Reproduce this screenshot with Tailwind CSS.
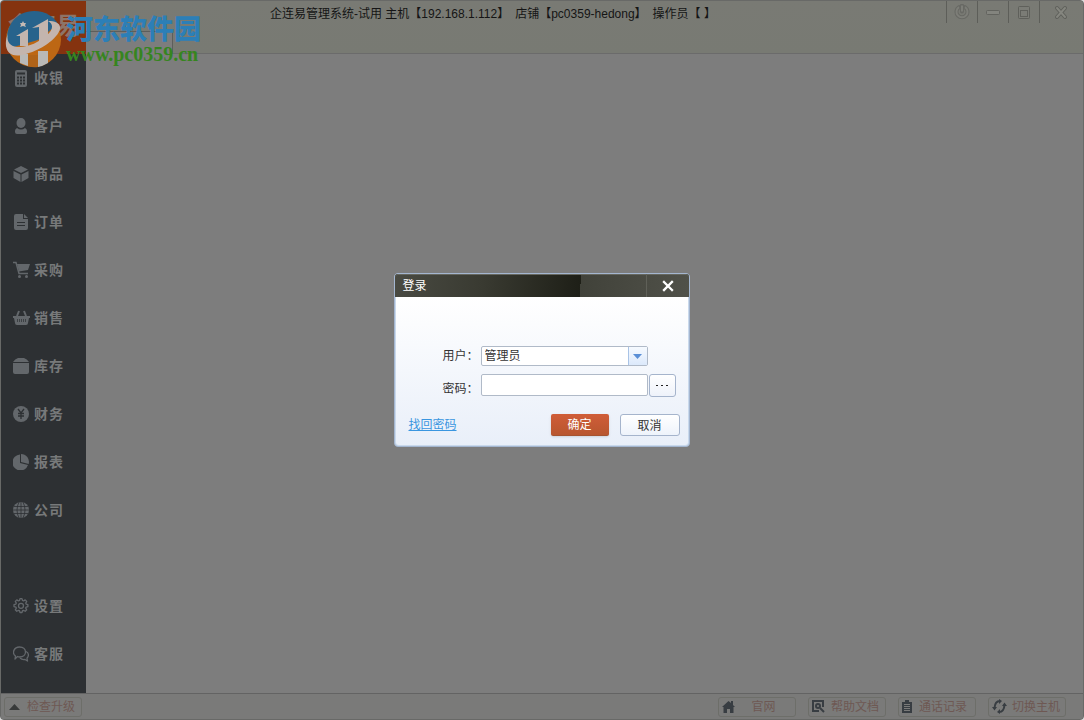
<!DOCTYPE html>
<html lang="zh-CN">
<head>
<meta charset="utf-8">
<title>企连易管理系统</title>
<script src="https://cdn.jsdelivr.net/npm/@tailwindcss/browser@4"></script>
</head>
<body class="h-screen overflow-hidden bg-[#dddddd] font-['Liberation_Sans','Noto_Sans_CJK_SC',sans-serif] text-[12px] leading-4">
<div class="relative flex h-full flex-col overflow-hidden rounded-[4px] border border-[#686967] bg-[#7d7d7d]">

  <header class="flex h-[53px] shrink-0 border-b border-[#6b6b6b] bg-linear-to-b from-[#797a74] to-[#787a73]">
    <div class="-mb-px flex w-[85px] shrink-0 items-start bg-[#85330f] pt-[9px] pl-[7px] text-[24px] leading-8 font-bold text-[#8d7468]">企连易</div>
    <div class="flex w-[87px] shrink-0 items-end">
      <div class="-mb-px h-[23px] w-full border-t border-r border-[#5d5e5c] bg-[#7d7d7d]"></div>
    </div>
    <h1 class="flex grow gap-[6px] pt-[5px] pl-[97px] whitespace-pre text-[#151515]"><span>企连易管理系统-试用 主机【192.168.1.112】</span><span>店铺【pc0359-hedong】</span><span>操作员【 】</span></h1>
    <div class="mr-px flex h-[22px] shrink-0">
      <button aria-label="电源" class="flex w-[31px] items-center justify-center border-l border-[#5d5e59]">
        <svg class="size-4" viewBox="0 0 16 16" fill="none"><path d="M5 3.200a5.500 5.500 0 1 0 6 0M8 1.500v6" stroke="#686964" stroke-width="4" stroke-linecap="round"/><path d="M5 3.200a5.500 5.500 0 1 0 6 0M8 1.500v6" stroke="#7d7e78" stroke-width="2"/></svg>
      </button>
      <button aria-label="最小化" class="flex w-[31px] items-center justify-center border-l border-[#5d5e59]">
        <svg class="size-4" viewBox="0 0 16 16"><rect x="1.500" y="6.500" width="13" height="4" rx="1" fill="#83847e" stroke="#62635e"/></svg>
      </button>
      <button aria-label="最大化" class="flex w-[31px] items-center justify-center border-l border-[#5d5e59]">
        <svg class="size-4" viewBox="0 0 16 16" fill="#7b7c76" stroke="#5f605b"><rect x="2.500" y="2.500" width="11" height="12" rx="1"/><rect x="4.500" y="6.500" width="7" height="6"/></svg>
      </button>
      <button aria-label="关闭" class="flex w-[43px] items-center justify-center border-l border-[#5d5e59]">
        <svg class="size-4" viewBox="0 0 16 16" stroke-linecap="round"><path d="m4 4 8 9m0-9-8 9" stroke="#5f605b" stroke-width="4"/><path d="m4 4 8 9m0-9-8 9" stroke="#85867f" stroke-width="2"/></svg>
      </button>
    </div>
  </header>

  <div class="flex min-h-0 grow">
    <nav class="flex w-[85px] shrink-0 flex-col bg-[#2d3033] text-[14px] font-bold text-[#77797a]">
      <a href="#" class="flex h-12 items-center gap-[5px] pl-3"><svg class="size-4 overflow-visible text-[#63676b]" viewBox="0 0 16 16"><rect x="2" width="12" height="17" rx="2" fill="currentColor"/><path d="M4 7.500h8M4 10.500h8M4 13.500h8" stroke="#2d3033" stroke-width="2" stroke-dasharray="2 1"/><path d="M4 3.500h8" stroke="#2d3033" stroke-width="2"/></svg><span class="tracking-[1px]">收银</span></a>
      <a href="#" class="flex h-12 items-center gap-[5px] pl-3"><svg class="size-4 text-[#63676b]" viewBox="0 0 16 16" fill="currentColor"><ellipse cx="8" cy="5" rx="4.500" ry="5"/><path d="M4 10q4 3 8 0 2 1 2 3v1q0 2-2 2H4q-2 0-2-2v-1q0-2 2-3Z"/></svg><span class="tracking-[1px]">客户</span></a>
      <a href="#" class="flex h-12 items-center gap-[5px] pl-3"><svg class="size-4 text-[#63676b]" viewBox="0 0 16 16" fill="currentColor"><path d="m8 0 7 3.500L8 7 1 3.500ZM.5 5 7.500 8.500V16l-7-4ZM15.500 5l-7 3.500V16l7-4Z"/></svg><span class="tracking-[1px]">商品</span></a>
      <a href="#" class="flex h-12 items-center gap-[5px] pl-3"><svg class="size-4 text-[#63676b]" viewBox="0 0 16 16"><path d="M3 0h7v5h5v9q0 2-2 2H3q-2 0-2-2V2q0-2 2-2Zm8 0 4 4h-4Z" fill="currentColor"/><path d="M4 8.500h8M4 11.500h8" stroke="#2d3033"/></svg><span class="tracking-[1px]">订单</span></a>
      <a href="#" class="flex h-12 items-center gap-[5px] pl-3"><svg class="size-4 overflow-visible text-[#63676b]" viewBox="0 0 16 16"><path d="M0 .5h3l3 11h9" fill="none" stroke="currentColor" stroke-width="1.500"/><path d="M4 2h13l-2 6-9 1.500Z" fill="currentColor"/><circle cx="6.500" cy="14.500" r="1.500" fill="currentColor"/><circle cx="13.500" cy="14.500" r="1.500" fill="currentColor"/></svg><span class="tracking-[1px]">采购</span></a>
      <a href="#" class="flex h-12 items-center gap-[5px] pl-3"><svg class="size-4 overflow-visible text-[#63676b]" viewBox="0 0 16 16"><path d="M0 6h17v2h-1l-1 5q0 2-2 2H4q-2 0-2-2L1 8H0Z" fill="currentColor"/><path d="M4 6 6 1m7 5-2-5" stroke="currentColor" stroke-width="2"/><path d="M4.500 9v3m2-3v3m2-3v3m2-3v3m2-3v3" stroke="#2d3033" stroke-width=".7"/></svg><span class="tracking-[1px]">销售</span></a>
      <a href="#" class="flex h-12 items-center gap-[5px] pl-3"><svg class="size-4 text-[#63676b]" viewBox="0 0 16 16" fill="currentColor"><path d="M0 4q2-3 5-4h6q3 1 5 4ZM0 5h16v9q0 2-2 2H2q-2 0-2-2Z"/></svg><span class="tracking-[1px]">库存</span></a>
      <a href="#" class="flex h-12 items-center gap-[5px] pl-3"><svg class="size-4 text-[#63676b]" viewBox="0 0 16 16"><circle cx="8" cy="8" r="8" fill="currentColor"/><path d="m5 3 3 4 3-4M8 7v6M5 7.500h6M5 10h6" fill="none" stroke="#2d3033" stroke-width="1.300"/></svg><span class="tracking-[1px]">财务</span></a>
      <a href="#" class="flex h-12 items-center gap-[5px] pl-3"><svg class="size-4 text-[#63676b]" viewBox="0 0 16 16" fill="currentColor"><path d="M7 .5V9l8 2A8 8 0 1 1 7 .5Z"/><path d="M8 0a8 8 0 0 1 7.700 10L8 8Z"/></svg><span class="tracking-[1px]">报表</span></a>
      <a href="#" class="flex h-12 items-center gap-[5px] pl-3"><svg class="size-4 text-[#63676b]" viewBox="0 0 16 16"><circle cx="8" cy="8" r="8" fill="currentColor"/><path d="M8 0v16M0 8h16M1 4.500h14M1 11.500h14M6 0Q2 8 6 16M10 0q4 8 0 16" fill="none" stroke="#2d3033" stroke-width=".8"/></svg><span class="tracking-[1px]">公司</span></a>
      <a href="#" class="mt-12 flex h-12 items-center gap-[5px] pl-3"><svg class="size-4 text-[#63676b]" viewBox="0 0 16 16" fill="none" stroke="currentColor" stroke-width="1.300" stroke-linejoin="round"><path d="m6.500 2.500.5-1.800h2l.5 1.800 1 .4 1.700-1 1.500 1.500-1 1.700.4 1 1.800.5v2l-1.800.5-.4 1 1 1.700-1.500 1.500-1.700-1-1 .4-.5 1.800H7l-.5-1.800-1-.4-1.700 1-1.500-1.500 1-1.700-.4-1L1 8.600v-2l1.900-.5.4-1-1-1.700 1.500-1.500 1.700 1Z"/><circle cx="8" cy="7.800" r="2.500"/></svg><span class="tracking-[1px]">设置</span></a>
      <a href="#" class="flex h-12 items-center gap-[5px] pl-3"><svg class="size-4 text-[#63676b]" viewBox="0 0 16 16" fill="none" stroke="currentColor" stroke-width="1.300" stroke-linejoin="round"><path d="m2 13 .5-3C-1.500 7 1 1 6.500 1c8 0 8 10 0 10q-1 0-2-.5Z"/><path d="M13 5.500c3 1 3 5 1 6.500l.5 3-2.500-1.500q-3 .5-5-1.500"/></svg><span class="tracking-[1px]">客服</span></a>
    </nav>

    <main class="relative grow">
      <section role="dialog" aria-labelledby="login-title" class="absolute top-[219px] left-[calc(50%-191px)] w-[296px] overflow-hidden rounded-[4px] border border-[#a4b6d0] bg-[#c9d9ec]">
        <div class="-mx-px -mt-px flex h-6 items-center rounded-t-[4px] border border-b-0 border-[#2f302c] bg-[linear-gradient(94deg,#494a42_0%,#393a31_30%,#1e1f17_63%,#41423a_63%,#505149_100%)] pl-2 text-white shadow-[inset_0_1px_0_#66675f]">
          <h2 id="login-title" class="grow pt-px">登录</h2>
          <button aria-label="关闭" class="flex h-full w-[43px] items-center justify-center border-l border-[#5f6058] pt-px"><svg class="size-3" viewBox="0 0 12 12"><path d="m2 2 8 8m0-8-8 8" stroke="#fff" stroke-width="2.300" stroke-linecap="square"/></svg></button>
        </div>
        <form class="mx-px mb-px rounded-b-[3px] bg-linear-to-b from-white to-[#e9eff9] pt-[49px] pb-[9px] text-[#333333]">
          <div class="flex h-5 items-center pl-[47px]">
            <label for="user" class="w-[38px]">用户：</label>
            <div class="relative h-5 w-[167px]">
              <select id="user" class="size-full appearance-none rounded-[2px] border border-[#b0bac8] bg-white pl-[3px] leading-4"><option>管理员</option></select>
              <span class="pointer-events-none absolute inset-y-px right-px flex w-[19px] items-center justify-center border-l border-[#a9c3e6] bg-linear-to-b from-[#f6faff] to-[#dce9fb]"><svg class="h-[5px] w-[9px]" viewBox="0 0 9 5"><path d="M0 0h9L4.500 5Z" fill="#5a8fd6"/></svg></span>
            </div>
          </div>
          <div class="mt-2 flex pl-[47px]">
            <label for="password" class="w-[38px] pt-[7px]">密码：</label>
            <input id="password" type="password" class="h-[22px] w-[167px] rounded-[2px] border border-[#b0bac8] bg-white px-1">
            <button type="button" aria-label="软键盘" class="ml-px flex h-[23px] w-[27px] items-center justify-center rounded-[3px] border border-[#a5b4cc] bg-linear-to-b from-white to-[#eef2fa]"><svg class="h-px w-3" viewBox="0 0 12 1"><path d="M0 .5h12" stroke="#222222" stroke-dasharray="2 3"/></svg></button>
          </div>
          <div class="mt-[17px] flex items-center pr-[8px] pl-[13px]">
            <a href="#" class="grow text-[#3a96e0] underline">找回密码</a>
            <button type="submit" class="h-[22px] w-[58px] rounded-[2px] border-b border-[#a65330] bg-linear-to-b from-[#d05d38] to-[#b8562f] pt-px text-white shadow-sm">确定</button>
            <button type="button" class="ml-[11px] h-[22px] w-[60px] rounded-[3px] border border-[#a5b4cc] bg-linear-to-b from-white to-[#eef3fb] pt-px">取消</button>
          </div>
        </form>
      </section>
    </main>
  </div>

  <footer class="flex h-[26px] shrink-0 items-center gap-3 border-t border-[#636363] bg-[#7a7a79] pr-[17px] pl-[3px] text-[#6e5853]">
    <button class="flex h-5 w-[78px] items-center gap-[7px] rounded-[3px] border border-[#6d6e69] px-1"><svg class="h-[6px] w-[11px]" viewBox="0 0 11 6"><path d="m0 6 5.500-6L11 6Z" fill="#383a3a"/></svg><span class="pt-px">检查升级</span></button>
    <button class="ml-auto flex h-5 w-[78px] items-center rounded-[3px] border border-[#6d6e69] px-[3px]"><svg class="size-[13px]" viewBox="0 0 13 13"><path d="m0 7 6.500-6L9 3V1h2v4l2 2h-1.500v6H8V9H5v4H1.500V7Z" fill="#383d42"/></svg><span class="grow pt-px">官网</span></button>
    <button class="flex h-5 w-[78px] items-center gap-[6px] rounded-[3px] border border-[#6d6e69] px-[3px] whitespace-nowrap"><svg class="size-[13px] shrink-0" viewBox="0 0 13 13" fill="none" stroke="#383d42" stroke-width="2"><path d="M7 11H1V1h10v6"/><circle cx="6" cy="6" r="2"/><path d="m8 8 4 4"/></svg><span class="pt-px">帮助文档</span></button>
    <button class="flex h-5 w-[78px] items-center gap-[6px] rounded-[3px] border border-[#6d6e69] px-[3px] whitespace-nowrap"><svg class="h-[13px] w-[11px] shrink-0" viewBox="0 0 11 13"><path d="M0 2h3V0h4v2h3v11H0Z" fill="#383d42"/><path d="M2 4.500h6M2 6.500h6M2 8.500h6M2 10.500h6" stroke="#7a7a79"/></svg><span class="pt-px">通话记录</span></button>
    <button class="flex h-5 w-[78px] items-center gap-[5px] rounded-[3px] border border-[#6d6e69] px-[3px] whitespace-nowrap"><svg class="size-[15px] shrink-0" viewBox="0 0 15 15" fill="none" stroke="#383d42" stroke-width="2"><path d="M8 2Q3 2 2.500 9M7 13q5 0 5.500-7"/><path d="m7 0 3 2-3 3ZM8 10l-3 3 3 2ZM0 8h5l-2.500 3.500ZM10 7l2.500-3.500L15 7Z" fill="#383d42" stroke="none"/></svg><span class="pt-px">切换主机</span></button>
  </footer>

  <div class="pointer-events-none absolute top-2 left-1 flex gap-1">
    <svg class="h-[60px] w-[57px] shrink-0" viewBox="0 0 57 60">
      <circle cx="28.500" cy="30.500" r="27.500" fill="#bd6714"/>
      <path d="M2 34C0 16 12 2 29 2c12 0 20 6 24 13L33 31 5 39Z" fill="#27638c"/>
      <path d="M15 45h8v12l-8-3ZM33 42h10v12q-5 3-10 4Z" fill="#b9b9b8"/>
      <path d="M23 46h10v12q-5 1-10-1Z" fill="#b06318"/>
      <path d="M3 24C-3 40 4 49 17 46c19-4 36-17 38-26 1-6-5-8-12-8 6 3 5 9-1 14-7 7-19 12-27 12C5 38 1 33 3 24Z" fill="#c4b5ae"/>
      <path d="m11 27 12-7v17h-8V27ZM27 19l16-9v20l-9 5V18Z" fill="#c4b5ae"/>
      <path d="m18 12 1 2h2l-1 2 1 2-3-1-3 1 1-2-1-2h2Z" fill="#c4bab5"/>
    </svg>
    <div class="flex flex-col pt-[7px] whitespace-nowrap">
      <strong class="text-[27px] leading-7 font-black text-[#2c7fb7]">河东软件园</strong>
      <span class="font-['Liberation_Serif',serif] text-[20px] leading-5 font-bold text-[#36851f]">www.pc0359.cn</span>
    </div>
  </div>
</div>
</body>
</html>
